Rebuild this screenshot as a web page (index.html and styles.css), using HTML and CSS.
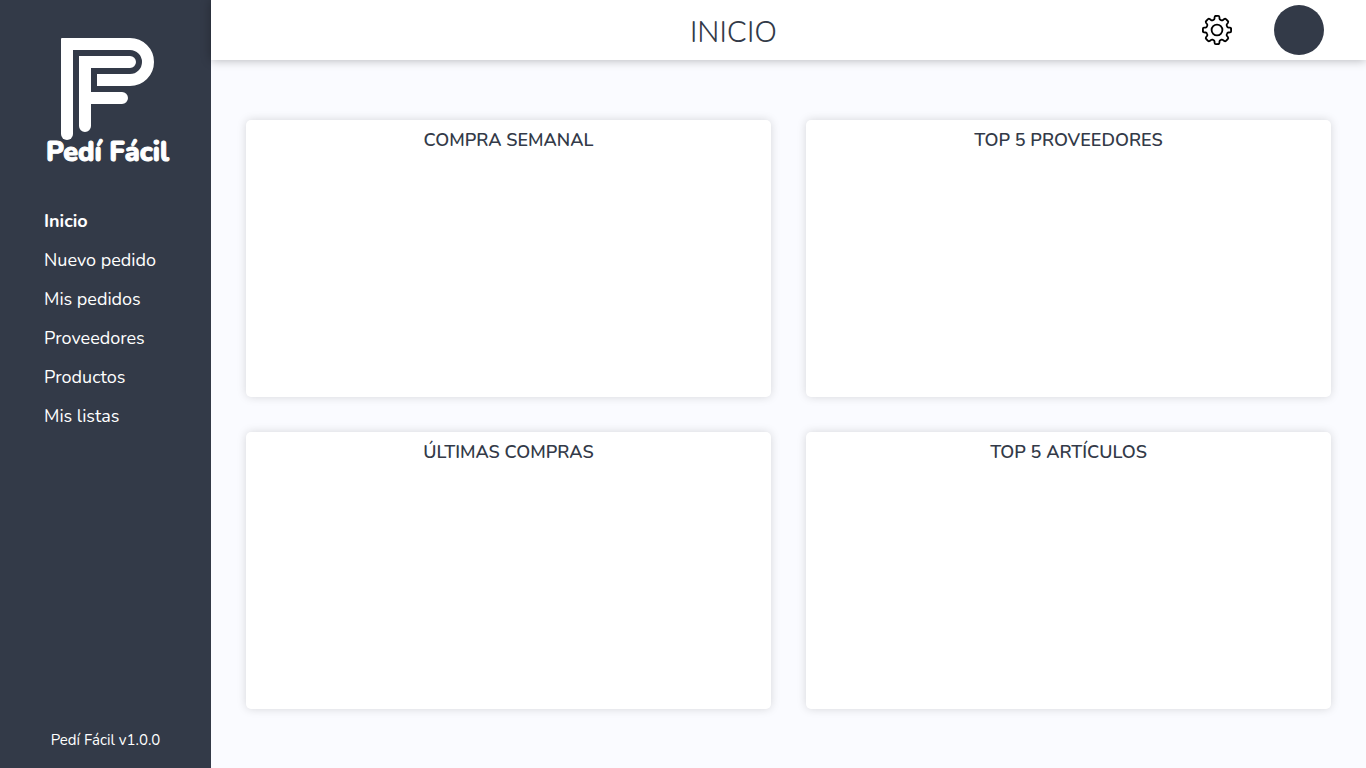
FILE: index.html
```html
<!DOCTYPE html>
<html lang="es">
<head>
<meta charset="utf-8">
<meta name="viewport" content="width=device-width, initial-scale=1">
<title>Pedí Fácil</title>
<link rel="stylesheet" href="styles.css">
</head>
<body>
<div class="app">
  <aside class="sidebar">
    <a class="brand" href="#" aria-label="Pedí Fácil">
      <svg class="brand-mark" viewBox="60 37 96 104" width="96" height="104" fill="none" stroke="#fff" stroke-width="12" aria-hidden="true">
        <path d="M67 134V44" stroke-linecap="round"/>
        <path d="M62 44H130a18 18 0 0 1 0 36H97"/>
        <path d="M61 50V39a1 1 0 0 1 1-1h11v12z" fill="#fff" stroke="none"/>
        <path d="M85 126V62H130M85 98H122" stroke-linecap="round"/>
      </svg>
      <span class="brand-name">Pedí Fácil</span>
    </a>
    <nav class="menu">
      <a class="menu-link active" href="#" aria-current="page">Inicio</a>
      <a class="menu-link" href="#">Nuevo pedido</a>
      <a class="menu-link" href="#">Mis pedidos</a>
      <a class="menu-link" href="#">Proveedores</a>
      <a class="menu-link" href="#">Productos</a>
      <a class="menu-link" href="#">Mis listas</a>
    </nav>
    <p class="version">Pedí Fácil v1.0.0</p>
  </aside>
  <div class="page">
    <header class="topbar">
      <h1 class="title">INICIO</h1>
      <div class="actions">
        <button class="icon-button" type="button" aria-label="Configuración">
          <svg viewBox="0 0 30 30" width="30" height="30" fill="none" stroke="#000" stroke-width="1.800" stroke-linecap="round" stroke-linejoin="round" aria-hidden="true">
            <circle cx="15" cy="15" r="5.400"/>
            <path id="cog" d="M13.800 .9H16.200Q17.300 .9 17.400 2L17.500 3.600Q17.600 4.600 18.500 4.900L19.500 5.300Q20.300 5.600 21 5L22.300 4Q23.200 3.400 24 4.200L25.800 6Q26.600 6.800 26 7.700L25 9Q24.400 9.700 24.700 10.500L25.100 11.500Q25.400 12.400 26.400 12.500L28 12.600Q29.100 12.700 29.100 13.800"/>
            <use href="#cog" transform="rotate(90 15 15)"/>
            <use href="#cog" transform="rotate(180 15 15)"/>
            <use href="#cog" transform="rotate(270 15 15)"/>
          </svg>
        </button>
        <button class="avatar" type="button" aria-label="Perfil"></button>
      </div>
    </header>
    <main class="dashboard">
      <section class="card"><h2 class="card-title">COMPRA SEMANAL</h2></section>
      <section class="card"><h2 class="card-title">TOP 5 PROVEEDORES</h2></section>
      <section class="card"><h2 class="card-title">ÚLTIMAS COMPRAS</h2></section>
      <section class="card"><h2 class="card-title">TOP 5 ARTÍCULOS</h2></section>
    </main>
  </div>
</div>
</body>
</html>
```
FILE: styles.css
```css
* { box-sizing: border-box; }
body {
  margin: 0;
  font-family: Nunito, Lato, "Open Sans", sans-serif;
  font-size: 18px;
  line-height: 24px;
  color: #333a48;
  background: #fafbff;
}
.app { display: flex; min-height: 100vh; }
.sidebar {
  display: flex;
  flex-direction: column;
  flex: 0 0 211px;
  padding: 37px 0 16px;
  background: #333a48;
  color: #fff;
}
.brand {
  display: flex;
  flex-direction: column;
  align-items: center;
  padding-left: 4px;
  color: #fff;
  text-decoration: none;
}
.brand-mark { display: block; }
.brand-name {
  font-size: 27px;
  font-weight: 800;
  line-height: 24px;
  -webkit-text-stroke: 1px #fff;
}
.menu {
  display: flex;
  flex-direction: column;
  gap: 15px;
  padding: 44px 24px 0 44px;
}
.menu-link { color: #fff; text-decoration: none; }
.active { font-weight: 700; }
.version {
  margin: auto 0 0;
  font-size: 15px;
  text-align: center;
}
.page {
  display: flex;
  flex: 1;
  flex-direction: column;
  min-width: 0;
}
.topbar {
  display: flex;
  align-items: center;
  height: 60px;
  padding: 0 42px 0 54px;
  background: #fff;
  box-shadow: 0 0 10px rgba(0, 0, 0, .3);
}
.title {
  flex: 1;
  margin: 0;
  padding-top: 6px;
  font-size: 30px;
  font-weight: 300;
  line-height: 40px;
  text-align: center;
}
.actions {
  display: flex;
  align-items: center;
  gap: 42px;
}
.icon-button, .avatar {
  padding: 0;
  border: 0;
  cursor: pointer;
}
.icon-button { background: none; }
.icon-button svg { display: block; }
.avatar {
  width: 50px;
  height: 50px;
  border-radius: 50%;
  background: #333a48;
}
.dashboard {
  display: grid;
  flex: 1;
  grid-template-columns: 1fr 1fr;
  grid-auto-rows: 1fr;
  gap: 35px;
  padding: 60px 35px 59px;
}
.card {
  padding: 8px;
  border-radius: 5px;
  background: #fff;
  box-shadow: 0 0 10px rgba(0, 0, 0, .15);
}
.card-title {
  margin: 0;
  font-size: 18px;
  font-weight: 600;
  text-align: center;
}
```
